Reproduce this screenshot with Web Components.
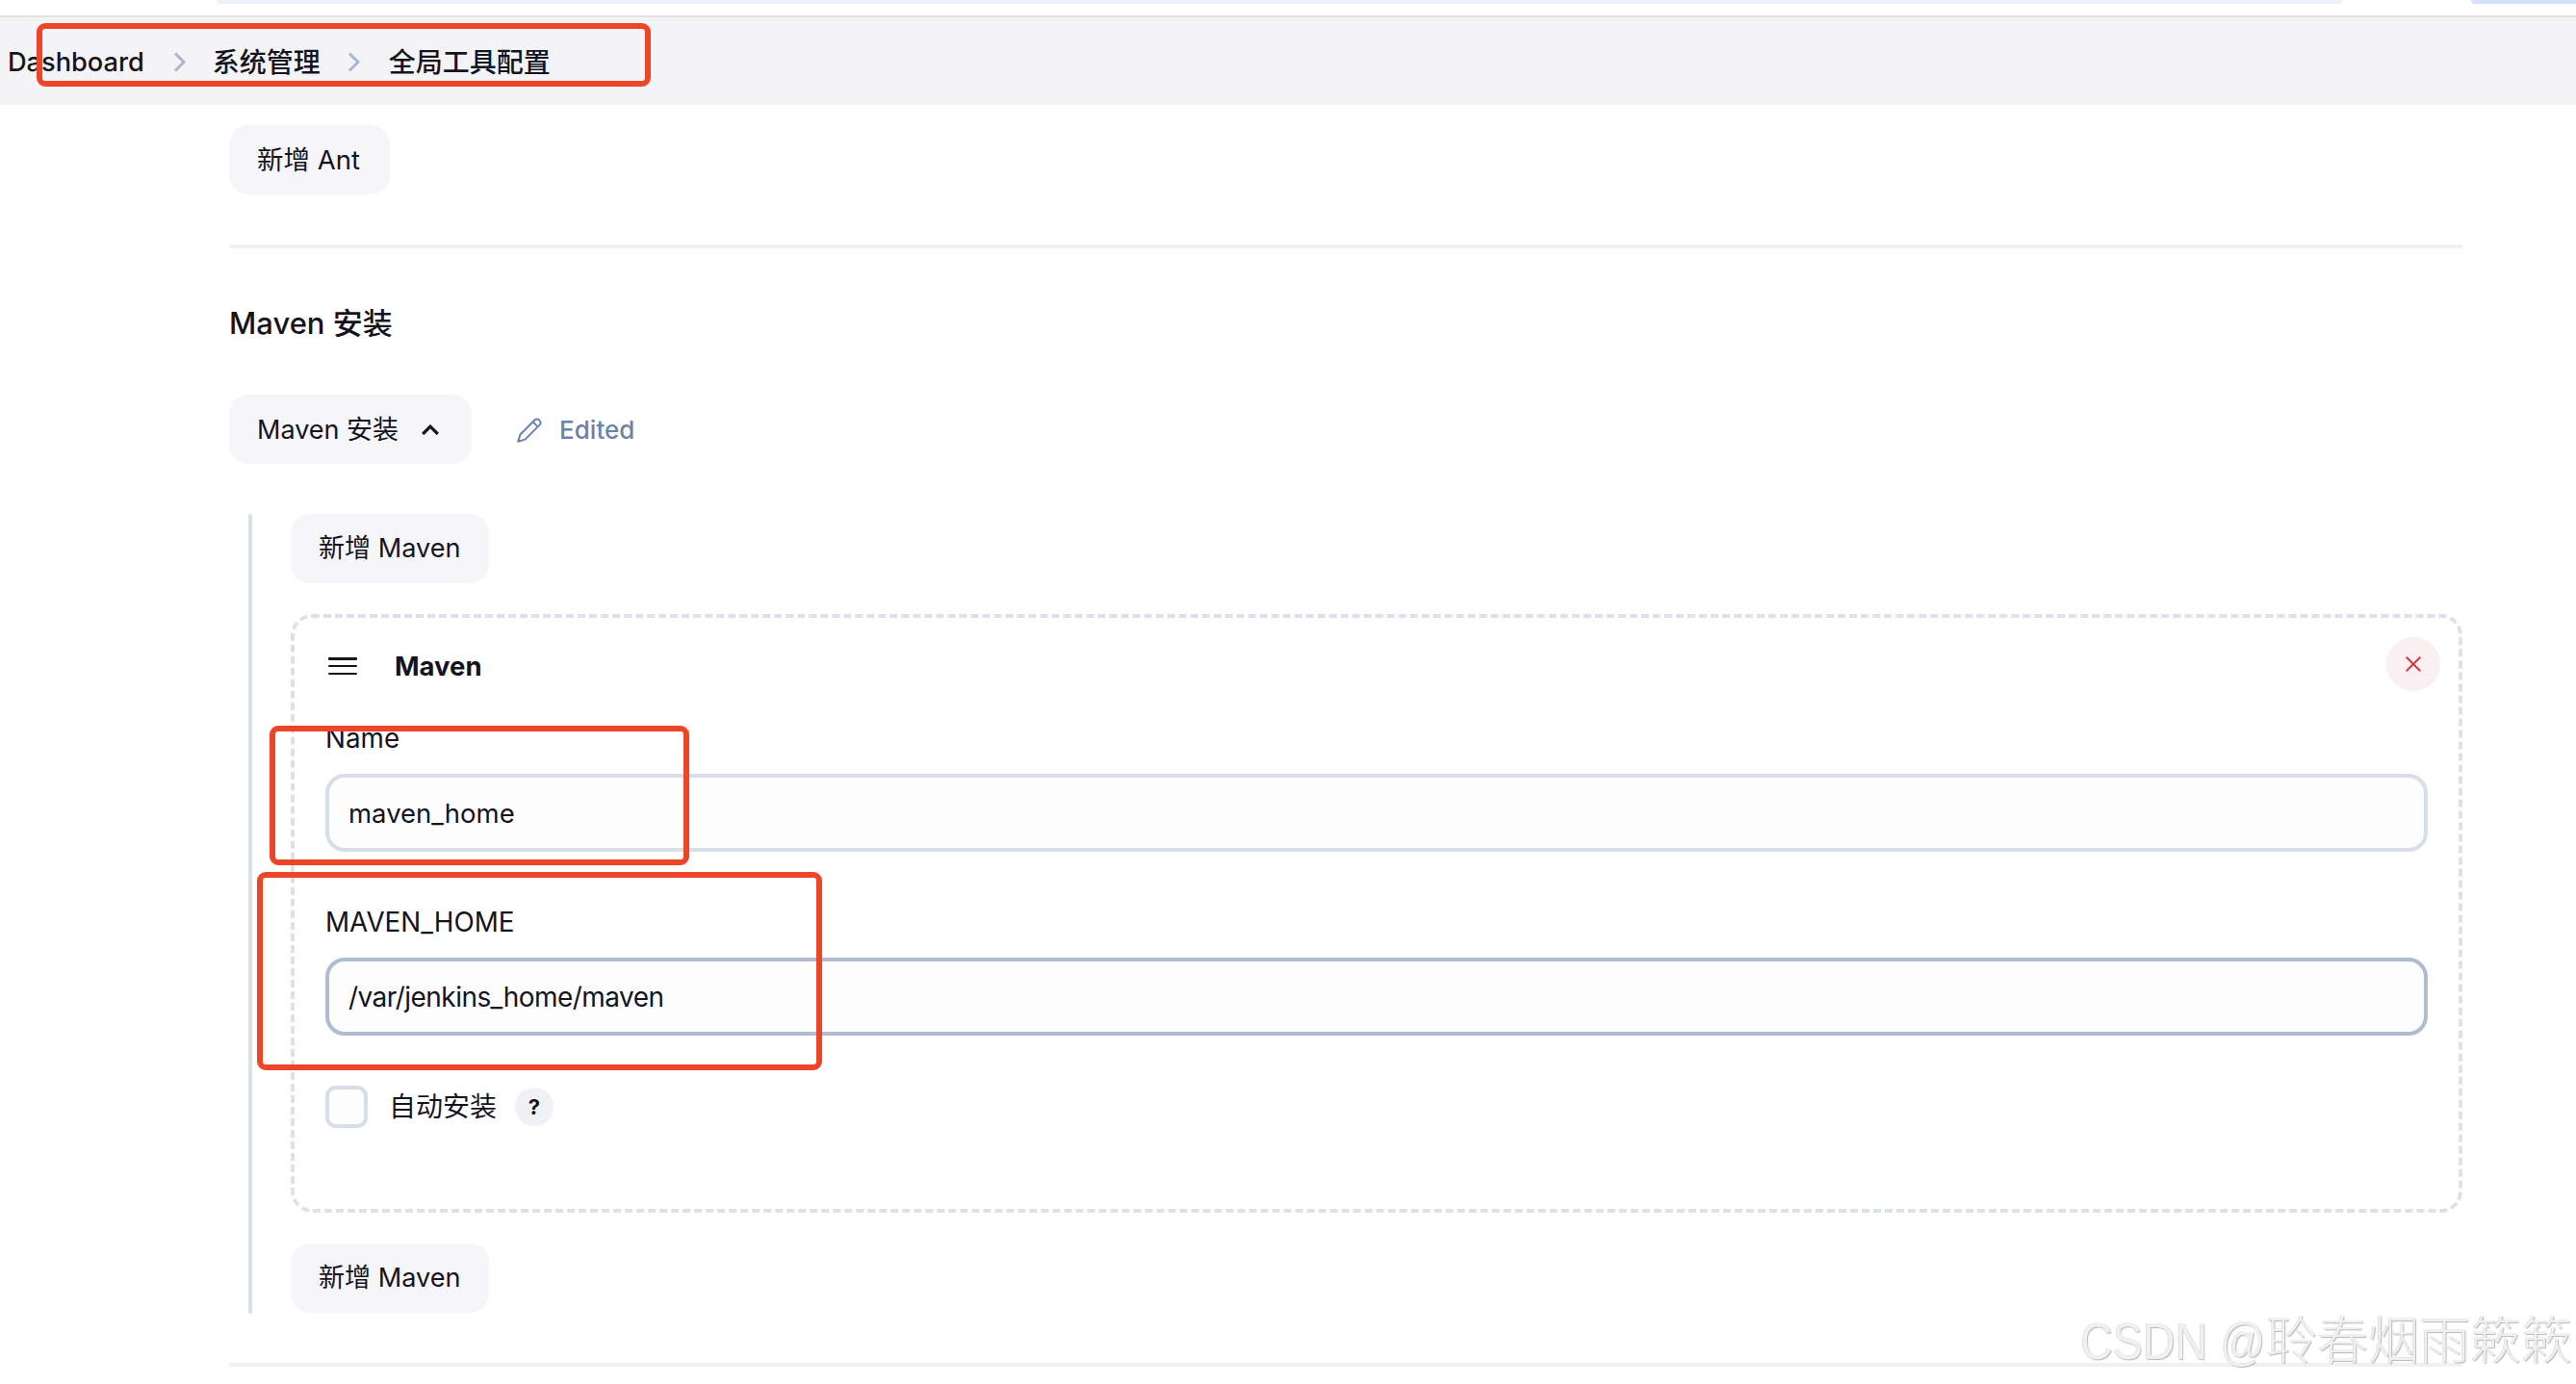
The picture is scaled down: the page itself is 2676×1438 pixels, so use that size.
<!DOCTYPE html>
<html lang="zh"><head><meta charset="utf-8"><title>全局工具配置</title>
<style>
html,body{margin:0;padding:0;height:1438px;overflow:hidden;background:#fff}
body{font-family:Inter,"Noto Sans CJK SC",sans-serif;font-size:28px;color:#14141f;position:relative}
</style></head><body>
<x-topstrip></x-topstrip>
<x-breadcrumb><span style="font-size:27.2px">Dashboard</span><span>系统管理</span><span>全局工具配置</span></x-breadcrumb>
<x-page>
  <x-btn style="--pr:31px">新增 Ant</x-btn>
  <x-rule></x-rule>
  <x-heading>Maven 安装</x-heading>
  <x-toolbar></x-toolbar>
  <x-nested>
    <x-btn style="--fs:27.1px">新增 Maven</x-btn>
    <x-card title="Maven">
      <x-field label="Name">maven_home</x-field>
      <x-field label="MAVEN_HOME" active><span style="letter-spacing:-.55px">/var/jenkins_home/maven</span></x-field>
      <x-check>自动安装</x-check>
    </x-card>
    <x-btn style="--fs:27.1px">新增 Maven</x-btn>
  </x-nested>
  <x-rule bottom></x-rule>
</x-page>
<x-mark style="left:38px;top:24px;width:638px;height:66px"></x-mark>
<x-mark style="left:280px;top:754px;width:436px;height:145px"></x-mark>
<x-mark style="left:267px;top:906px;width:587px;height:206px"></x-mark>
<x-watermark></x-watermark>
<script>
function def(name, css, html){
  customElements.define(name, class extends HTMLElement{
    constructor(){super();const r=this.attachShadow({mode:'open'});
      r.innerHTML='<style>'+css+'</style>'+(typeof html==='function'?'':html);}
    connectedCallback(){
      if(typeof html==='function' && !this._d){this._d=1;
        this.shadowRoot.innerHTML='<style>'+css+'</style>'+html(this);}
    }
  });
}
const chev='<svg width="13" height="21" viewBox="0 0 13 21" fill="none" stroke="#a9b7cd" stroke-width="3"><path d="M2 1.500l9 9-9 9"/></svg>';

def('x-topstrip',
 `:host{display:flex;height:16px;border-bottom:2px solid #e3e3de;box-sizing:content-box}
  .a{margin-left:225px;width:2208px;height:4px;background:#edf2fa;border-radius:0 0 12px 12px}
  .b{margin-left:134px;flex:1;height:4px;background:#d6e2fb;border-radius:0 0 0 12px}`,
 '<div class="a"></div><div class="b"></div>');

def('x-breadcrumb',
 `:host{display:block;background:#f4f4f6;height:91px}
  .w{box-sizing:border-box;display:flex;align-items:center;height:91px;padding-left:8px;padding-top:2px;line-height:36px;color:#14141f;font-size:28px}
  .w ::slotted(span){font-weight:500}`,
 `<div class="w"><slot></slot></div>`);

def('x-page',
 `:host{display:block;padding:21px 118px 0 238px}`,
 '<slot></slot>');

def('x-btn',
 `:host{display:block;width:max-content}
  .b{display:flex;align-items:center;height:72px;padding:0 var(--pr,29px) 0 29px;background:#f6f6f9;border-radius:20px;font-size:var(--fs,27.5px);line-height:36px;color:#14141f;white-space:nowrap}`,
 '<div class="b" role="button"><slot></slot></div>');

def('x-rule',
 `:host{display:block;height:4px;background:#f1f1f4;margin-top:52px}`,
 '');

def('x-heading',
 `:host{display:block;margin-top:56px;font-size:31px;line-height:44px;font-weight:500;color:#14141f}`,
 '<slot></slot>');

def('x-toolbar',
 `:host{display:flex;align-items:center;margin-top:52px}
  .e{display:flex;align-items:center;gap:18px;margin:2px 0 0 47px;color:#6a84a8;font-weight:500;font-size:26px;line-height:36px}
  .b{display:flex;align-items:center;gap:24px;height:72px;padding:0 34px 0 29px;background:#f6f6f9;border-radius:20px;font-size:27px;line-height:36px;white-space:nowrap;color:#14141f}
  .b span{padding-top:1px}
  svg{display:block}`,
 `<div class="b" role="button"><span>Maven 安装</span>
    <svg width="18" height="11" viewBox="0 0 18 11" fill="none" stroke="#14141f" stroke-width="3.200"><path d="M1.200 10L9 2.200 16.800 10"/></svg></div>
  <div class="e"><svg width="26" height="26" viewBox="0 0 26 26" fill="none" stroke="#6a84a8" stroke-width="2" stroke-linejoin="round"><path d="M1.200 24.800l2.200-7.300L18.600 2.300a3 3 0 0 1 4.300 0l.8.8a3 3 0 0 1 0 4.300L8.500 22.600z"/><path d="M16.600 4.300l5.100 5.100"/></svg><span>Edited</span></div>`);

def('x-nested',
 `:host{display:flex;flex-direction:column;gap:32px;margin:52px 0 0 20px;padding-left:44px;position:relative}
  :host::before{content:"";position:absolute;left:0;top:0;bottom:-1px;width:4px;background:#d9e0e9;border-radius:2px}`,
 '<slot></slot>');

def('x-card',
 `:host{display:block;box-sizing:border-box;height:622px;border:4px dashed #dde1ea;border-radius:22px;padding:20px 32px 0}
  .h{display:flex;align-items:center;height:56px;margin-bottom:31px}
  .m{display:flex;flex-direction:column;gap:5.250px;width:30px;margin:4px 0 0 3px}
  .m i{display:block;height:2.500px;background:#14141f;border-radius:1px}
  .t{margin:4px 0 0 39px;font-weight:700;font-size:27.500px;line-height:36px;flex:1}
  .x{width:56px;height:56px;border-radius:50%;background:#fbf0f1;display:flex;align-items:center;justify-content:center;margin-right:-13px}
  svg{display:block}`,
 el=>`<div class="h"><div class="m"><i></i><i></i><i></i></div><div class="t">${el.getAttribute('title')||''}</div>
   <div class="x"><svg width="16" height="16" viewBox="0 0 16 16" stroke="#d93a3f" stroke-width="2" fill="none"><path d="M.7.7l14.600 14.600M15.300.7L.7 15.300"/></svg></div></div><slot></slot>`);

def('x-field',
 `:host{display:block;margin-bottom:55px}
  .l{font-size:27.800px;line-height:36px;margin-bottom:19px;color:#14141f}
  .i{box-sizing:border-box;height:81px;border:4px solid #d7dee7;border-radius:20px;background:#fdfdfe;padding:0 20px;display:flex;align-items:center;font-size:27.500px;line-height:36px;color:#14141f}
  :host([active]){margin-bottom:52px}
  :host([active]) .i{border-color:#b0bccf;font-size:28px}`,
 el=>`<div class="l">${el.getAttribute('label')||''}</div><div class="i" role="textbox"><slot></slot></div>`);

def('x-check',
 `:host{display:flex;align-items:center;height:44px}
  .c{box-sizing:border-box;width:44px;height:44px;border:4px solid #d7dee7;border-radius:11px;background:#fdfdfe}
  .t{margin-left:22px;font-size:28px;line-height:36px}
  .q{margin-left:19px;width:40px;height:40px;border-radius:50%;background:#f0f1f5;display:flex;align-items:center;justify-content:center;font-size:22px;font-weight:700;line-height:1}`,
 '<div class="c" role="checkbox"></div><div class="t"><slot></slot></div><div class="q">?</div>');

def('x-mark',
 `:host{display:block;position:absolute;box-sizing:border-box;border:6px solid #ee4528;border-radius:9px;pointer-events:none}`,
 '');

def('x-watermark',
 `:host{display:block;position:absolute;right:4px;top:1361px;white-space:nowrap;font-size:53px;line-height:56px;color:#f0f0f0;font-weight:300;
   font-family:"Noto Sans CJK SC",sans-serif;text-shadow:1px 1px 1px #b8b8b8,-.5px -.5px 0 #d4d4d4}
  .l{display:inline-block;font-family:"Liberation Sans",sans-serif;transform:scaleX(.88);transform-origin:left center;margin-right:-26px}`,
 '<span class="l">CSDN @</span><span>聆春烟雨簌簌</span>');

(function(){
  const b=document.querySelector('x-breadcrumb');
  const spans=[...b.querySelectorAll('span')];
  const sep=(l,r)=>{const s=document.createElement('span');s.style.cssText=`display:flex;margin:0 ${r}px 0 ${l}px`;s.innerHTML=chev;return s};
  spans[0].after(sep(30,28));
  spans[1].after(sep(28,30));
})();
</script>
</body></html>
